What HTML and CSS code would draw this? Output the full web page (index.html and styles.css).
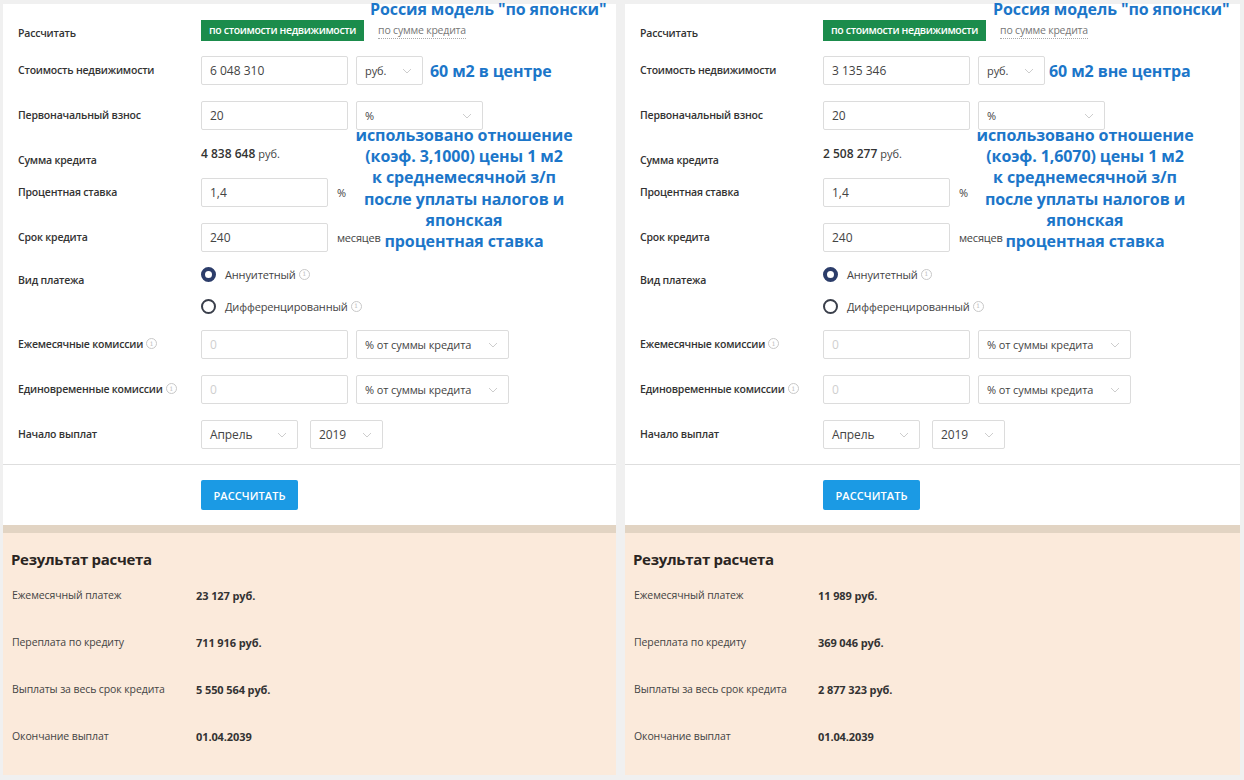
FILE: index.html
```html
<!DOCTYPE html>
<html lang="ru">
<head>
<meta charset="utf-8">
<title>Ипотечный калькулятор</title>
<link rel="stylesheet" href="styles.css">
</head>
<body>
<div class="page">
  <section class="panel panel-left">
    <div class="calc">
      <div class="form">
        <div class="row row-mode">
          <div class="label">Рассчитать</div>
          <div class="ctrl"><span class="tab tab-active">по стоимости недвижимости</span><span class="tab tab-link">по сумме кредита</span></div>
        </div>
        <div class="row">
          <div class="label">Стоимость недвижимости</div>
          <div class="ctrl"><div class="input w147">6 048 310</div><div class="select w67"><span>руб.</span><svg class="chev" viewBox="0 0 10 6"><polyline points="1,1 5,5 9,1"/></svg></div></div>
        </div>
        <div class="row">
          <div class="label">Первоначальный взнос</div>
          <div class="ctrl"><div class="input w147">20</div><div class="select w127"><span>%</span><svg class="chev" viewBox="0 0 10 6"><polyline points="1,1 5,5 9,1"/></svg></div></div>
        </div>
        <div class="row row-sum">
          <div class="label">Сумма кредита</div>
          <div class="ctrl sum"><b>4 838 648</b> руб.</div>
        </div>
        <div class="row">
          <div class="label">Процентная ставка</div>
          <div class="ctrl"><div class="input w127">1,4</div><span class="unit">%</span></div>
        </div>
        <div class="row">
          <div class="label">Срок кредита</div>
          <div class="ctrl"><div class="input w127">240</div><span class="unit">месяцев</span></div>
        </div>
        <div class="row row-radio">
          <div class="label">Вид платежа</div>
          <div class="ctrl radios">
            <div class="radio"><span class="dot dot-on"></span>Аннуитетный<span class="info">i</span></div>
            <div class="radio"><span class="dot"></span>Дифференцированный<span class="info">i</span></div>
          </div>
        </div>
        <div class="row">
          <div class="label">Ежемесячные комиссии<span class="info">i</span></div>
          <div class="ctrl"><div class="input w147 ph">0</div><div class="select w152"><span>% от суммы кредита</span><svg class="chev" viewBox="0 0 10 6"><polyline points="1,1 5,5 9,1"/></svg></div></div>
        </div>
        <div class="row">
          <div class="label">Единовременные комиссии<span class="info">i</span></div>
          <div class="ctrl"><div class="input w147 ph">0</div><div class="select w152"><span>% от суммы кредита</span><svg class="chev" viewBox="0 0 10 6"><polyline points="1,1 5,5 9,1"/></svg></div></div>
        </div>
        <div class="row">
          <div class="label">Начало выплат</div>
          <div class="ctrl"><div class="select w97"><span>Апрель</span><svg class="chev" viewBox="0 0 10 6"><polyline points="1,1 5,5 9,1"/></svg></div><div class="select w73 gap12"><span>2019</span><svg class="chev" viewBox="0 0 10 6"><polyline points="1,1 5,5 9,1"/></svg></div></div>
        </div>
      </div>
      <div class="actions"><button class="btn">РАССЧИТАТЬ</button></div>
    </div>
    <div class="band"></div>
    <div class="result">
      <h2 class="result-title">Результат расчета</h2>
      <div class="res-row"><span class="res-label">Ежемесячный платеж</span><span class="res-value">23 127 руб.</span></div>
      <div class="res-row"><span class="res-label">Переплата по кредиту</span><span class="res-value">711 916 руб.</span></div>
      <div class="res-row"><span class="res-label">Выплаты за весь срок кредита</span><span class="res-value">5 550 564 руб.</span></div>
      <div class="res-row"><span class="res-label">Окончание выплат</span><span class="res-value">01.04.2039</span></div>
    </div>
    <div class="note note-title">Россия модель "по японски"</div>
    <div class="note note-area">60 м2 в центре</div>
    <div class="note note-text">использовано отношение<br>(коэф. 3,1000) цены 1 м2<br>к среднемесячной з/п<br>после уплаты налогов и<br>японская<br>процентная ставка</div>
  </section>

  <section class="panel panel-right">
    <div class="calc">
      <div class="form">
        <div class="row row-mode">
          <div class="label">Рассчитать</div>
          <div class="ctrl"><span class="tab tab-active">по стоимости недвижимости</span><span class="tab tab-link">по сумме кредита</span></div>
        </div>
        <div class="row">
          <div class="label">Стоимость недвижимости</div>
          <div class="ctrl"><div class="input w147">3 135 346</div><div class="select w67"><span>руб.</span><svg class="chev" viewBox="0 0 10 6"><polyline points="1,1 5,5 9,1"/></svg></div></div>
        </div>
        <div class="row">
          <div class="label">Первоначальный взнос</div>
          <div class="ctrl"><div class="input w147">20</div><div class="select w127"><span>%</span><svg class="chev" viewBox="0 0 10 6"><polyline points="1,1 5,5 9,1"/></svg></div></div>
        </div>
        <div class="row row-sum">
          <div class="label">Сумма кредита</div>
          <div class="ctrl sum"><b>2 508 277</b> руб.</div>
        </div>
        <div class="row">
          <div class="label">Процентная ставка</div>
          <div class="ctrl"><div class="input w127">1,4</div><span class="unit">%</span></div>
        </div>
        <div class="row">
          <div class="label">Срок кредита</div>
          <div class="ctrl"><div class="input w127">240</div><span class="unit">месяцев</span></div>
        </div>
        <div class="row row-radio">
          <div class="label">Вид платежа</div>
          <div class="ctrl radios">
            <div class="radio"><span class="dot dot-on"></span>Аннуитетный<span class="info">i</span></div>
            <div class="radio"><span class="dot"></span>Дифференцированный<span class="info">i</span></div>
          </div>
        </div>
        <div class="row">
          <div class="label">Ежемесячные комиссии<span class="info">i</span></div>
          <div class="ctrl"><div class="input w147 ph">0</div><div class="select w152"><span>% от суммы кредита</span><svg class="chev" viewBox="0 0 10 6"><polyline points="1,1 5,5 9,1"/></svg></div></div>
        </div>
        <div class="row">
          <div class="label">Единовременные комиссии<span class="info">i</span></div>
          <div class="ctrl"><div class="input w147 ph">0</div><div class="select w152"><span>% от суммы кредита</span><svg class="chev" viewBox="0 0 10 6"><polyline points="1,1 5,5 9,1"/></svg></div></div>
        </div>
        <div class="row">
          <div class="label">Начало выплат</div>
          <div class="ctrl"><div class="select w97"><span>Апрель</span><svg class="chev" viewBox="0 0 10 6"><polyline points="1,1 5,5 9,1"/></svg></div><div class="select w73 gap12"><span>2019</span><svg class="chev" viewBox="0 0 10 6"><polyline points="1,1 5,5 9,1"/></svg></div></div>
        </div>
      </div>
      <div class="actions"><button class="btn">РАССЧИТАТЬ</button></div>
    </div>
    <div class="band"></div>
    <div class="result">
      <h2 class="result-title">Результат расчета</h2>
      <div class="res-row"><span class="res-label">Ежемесячный платеж</span><span class="res-value">11 989 руб.</span></div>
      <div class="res-row"><span class="res-label">Переплата по кредиту</span><span class="res-value">369 046 руб.</span></div>
      <div class="res-row"><span class="res-label">Выплаты за весь срок кредита</span><span class="res-value">2 877 323 руб.</span></div>
      <div class="res-row"><span class="res-label">Окончание выплат</span><span class="res-value">01.04.2039</span></div>
    </div>
    <div class="note note-title">Россия модель "по японски"</div>
    <div class="note note-area">60 м2 вне центра</div>
    <div class="note note-text">использовано отношение<br>(коэф. 1,6070) цены 1 м2<br>к среднемесячной з/п<br>после уплаты налогов и<br>японская<br>процентная ставка</div>
  </section>
</div>
</body>
</html>
```
FILE: styles.css
```css
* { box-sizing: border-box; }

html, body {
  margin: 0;
  padding: 0;
  background: #f0f0f0;
}

body {
  font-family: "Open Sans", "Noto Sans", "DejaVu Sans", sans-serif;
  color: #333;
  width: 1244px;
  height: 780px;
  overflow: hidden;
}

.page {
  display: flex;
  gap: 9px;
  padding: 4px 4px 0 3px;
}

.panel {
  position: relative;
  width: 613px;
  display: flex;
  flex-direction: column;
}

.panel-right { width: 615px; }

.calc {
  background: #fff;
  height: 521px;
}

.form {
  padding: 16px 0 15px 15px;
  border-bottom: 1px solid #dedede;
}

.row {
  display: flex;
  align-items: center;
  height: 29px;
  margin-bottom: 16px;
}

.row:last-child { margin-bottom: 0; }

.label {
  width: 183px;
  flex: none;
  font-size: 10.5px;
  font-weight: 600;
  color: #333;
  display: flex;
  align-items: center;
  letter-spacing: -0.2px;
  padding-bottom: 2px;
}

.ctrl {
  display: flex;
  align-items: center;
}

.row-mode {
  height: 21px;
  margin-bottom: 15px;
}
.row-mode .label { padding-top: 4px; padding-bottom: 0; }

.tab {
  font-size: 10.5px;
  line-height: 21px;
  height: 21px;
}

.tab-active {
  background: #1b8c4c;
  color: #fff;
  font-weight: 600;
  padding: 0 8px;
  letter-spacing: -0.35px;
}

.tab-link {
  margin-left: 14px;
  color: #777;
  line-height: 15px;
  height: auto;
  border-bottom: 1px dotted #aaa;
  letter-spacing: -0.2px;
}

.input, .select {
  height: 29px;
  border: 1px solid #dcdcdc;
  border-radius: 2px;
  font-size: 12px;
  color: #444;
  display: flex;
  align-items: center;
  padding-left: 8px;
  background: #fff;
}

.select {
  justify-content: space-between;
  padding-right: 10px;
  margin-left: 8px;
  font-size: 11px;
  letter-spacing: -0.1px;
}

.select.w97 { margin-left: 0; font-size: 12px; }
.select.gap12 { margin-left: 12px; font-size: 12px; }

.input.ph { color: #cfcfcf; }

.w147 { width: 147px; }
.w127 { width: 127px; }
.w67 { width: 67px; }
.w152 { width: 153px; }
.w97 { width: 97px; }
.w73 { width: 73px; }

.chev {
  width: 10px;
  height: 6px;
  fill: none;
  stroke: #cdcdcd;
  stroke-width: 1;
}

.unit {
  font-size: 11px;
  color: #444;
  margin-left: 9px;
  letter-spacing: -0.2px;
}

.row-sum {
  height: 20px;
  align-items: flex-start;
  margin-top: 15px;
  margin-bottom: 12px;
}
.row-sum .label { padding-top: 7px; }

.sum {
  font-size: 11px;
  color: #444;
  line-height: 16px;
}
.sum b {
  font-size: 12px;
  font-weight: 600;
  color: #333;
  margin-right: 3px;
}

.row-radio {
  height: 50px;
  align-items: flex-start;
  margin-top: -3px;
  margin-bottom: 15px;
}
.row-radio .label { padding-top: 8px; }

.radios {
  flex-direction: column;
  align-items: flex-start;
  gap: 14px;
}

.radio {
  display: flex;
  align-items: center;
  height: 18px;
  font-size: 11px;
  color: #444;
  letter-spacing: -0.15px;
}

.dot {
  width: 15px;
  height: 15px;
  border-radius: 50%;
  border: 2px solid #3a3f4b;
  background: #fff;
  margin-right: 9px;
  flex: none;
}

.dot-on {
  border: 4px solid #2c3d6a;
  background: #fff;
}

.info {
  display: inline-flex;
  width: 11px;
  height: 11px;
  border: 1px solid #c8c8c8;
  border-radius: 50%;
  color: #c8c8c8;
  font-size: 8px;
  font-weight: 400;
  align-items: center;
  justify-content: center;
  margin-left: 3px;
  line-height: 1;
  letter-spacing: 0;
  font-family: "DejaVu Serif", serif;
}

.actions {
  padding: 15px 0 0 198px;
}

.btn {
  width: 97px;
  height: 30px;
  border: 0;
  border-radius: 2px;
  background: #1b9ae4;
  color: #fff;
  font-family: "Open Sans", "Noto Sans", sans-serif;
  font-size: 11px;
  font-weight: 600;
  letter-spacing: 0.1px;
  padding: 0;
}

.band {
  height: 8px;
  background: #e2d4c3;
}

.result {
  flex: 1;
  background: #fbeadb;
  padding: 16px 0 0 8px;
  height: 247px;
}

.result-title {
  margin: 0 0 18px 0;
  font-size: 15px;
  line-height: 20px;
  font-weight: 700;
  color: #2a2522;
  letter-spacing: -0.3px;
}

.res-row {
  display: flex;
  align-items: center;
  height: 16px;
  margin-bottom: 31px;
  font-size: 10.5px;
  letter-spacing: -0.1px;
}

.res-label {
  width: 185px;
  flex: none;
  color: #444;
  padding-left: 1px;
}

.res-value {
  font-weight: 700;
  font-size: 11px;
  color: #333;
}

.note {
  position: absolute;
  color: #1c76c9;
  font-weight: 700;
  font-size: 16px;
  line-height: 20px;
  white-space: nowrap;
  letter-spacing: -0.1px;
}

.note-title { top: -5px; left: 367px; }
.note-area { top: 57px; left: 427px; }
.note-text {
  top: 121px;
  left: 341px;
  width: 240px;
  text-align: center;
  line-height: 21.2px;
}

.panel-right .note-title { left: 368px; }
.panel-right .note-area { left: 424px; }
.panel-right .note-text { left: 340px; }
```
